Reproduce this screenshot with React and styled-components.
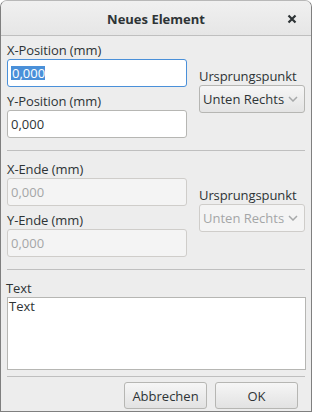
import React from 'react'
import styled, { createGlobalStyle } from 'styled-components'

const GlobalStyle = createGlobalStyle`
    html, body {
        margin: 0;
        padding: 0;
        background: #ffffff;
    }
    body {
        font-family: "Open Sans", "Noto Sans", sans-serif;
        font-size: 13px;
        color: #2e3436;
    }
`;

export default function App() {
    return (
        <>
            <GlobalStyle />
            <Window>
                <TitleBar>
                    <Title>Neues Element</Title>
                    <CloseButton>
                        <svg width="10" height="10" viewBox="0 0 10 10">
                            <path d="M1.5 1.5 L8.5 8.5 M8.5 1.5 L1.5 8.5" stroke="#2e3436" strokeWidth="2.2" strokeLinecap="butt" />
                        </svg>
                    </CloseButton>
                </TitleBar>

                <Body>
                    <Section>
                        <Fields>
                            <Label>X-Position (mm)</Label>
                            <Field $focused>
                                <Selected>0,000</Selected>
                            </Field>
                            <Label>Y-Position (mm)</Label>
                            <Field>0,000</Field>
                        </Fields>
                        <Origin>
                            <Label>Ursprungspunkt</Label>
                            <Combo>
                                Unten Rechts
                                <Chevron />
                            </Combo>
                        </Origin>
                    </Section>

                    <Separator />

                    <Section $spaced>
                        <Fields>
                            <Label>X-Ende (mm)</Label>
                            <Field $disabled>0,000</Field>
                            <Label>Y-Ende (mm)</Label>
                            <Field $disabled>0,000</Field>
                        </Fields>
                        <Origin>
                            <Label>Ursprungspunkt</Label>
                            <Combo $disabled>
                                Unten Rechts
                                <Chevron />
                            </Combo>
                        </Origin>
                    </Section>

                    <Separator />

                    <TextBlock>
                        <Label>Text</Label>
                        <TextArea>Text</TextArea>
                    </TextBlock>

                    <Separator />

                    <Buttons>
                        <Button>Abbrechen</Button>
                        <Button>OK</Button>
                    </Buttons>
                </Body>
            </Window>
        </>
    )
}

function Chevron() {
    return (
        <ChevronIcon width="10" height="6" viewBox="0 0 10 6">
            <polyline points="1,1 5,5 9,1" fill="none" stroke="#a7a9aa" strokeWidth="1.5" />
        </ChevronIcon>
    )
}

const Window = styled.div`
    width: 312px;
    height: 412px;
    box-sizing: border-box;
    border: 1px solid #7f7f7f;
    border-top-color: #b8b8b8;
    border-radius: 7px 7px 0 0;
    background: #ededed;
    display: flex;
    flex-direction: column;
    overflow: hidden;
`;

const TitleBar = styled.div`
    height: 34px;
    flex-shrink: 0;
    border-bottom: 1px solid #bfbfbf;
    background: linear-gradient(#f0f0f0, #e6e6e6);
    position: relative;
    display: flex;
    align-items: center;
    justify-content: center;
`;

const Title = styled.div`
    font-weight: 700;
    font-size: 13px;
    color: #2e3436;
    margin-top: 1px;
`;

const CloseButton = styled.div`
    position: absolute;
    right: 14px;
    top: 13px;
    width: 10px;
    height: 10px;
    display: flex;
`;

const Body = styled.div`
    flex: 1;
    display: flex;
    flex-direction: column;
    padding: 6px 5px 0 5px;
`;

const Section = styled.div`
    display: grid;
    grid-template-columns: 180px 106px;
    column-gap: 12px;
    align-items: center;
    padding: 0 0 12px 1px;
    margin-top: ${p => p.$spaced ? '10px' : '0'};
`;

const Fields = styled.div`
    display: flex;
    flex-direction: column;

    & > div:nth-child(3) {
        margin-top: 6px;
    }
`;

const Origin = styled.div`
    display: flex;
    flex-direction: column;
`;

const Label = styled.div`
    height: 17px;
    line-height: 17px;
    white-space: nowrap;
    color: #2e3436;
    letter-spacing: -0.1px;
`;

const Field = styled.div`
    height: 28px;
    box-sizing: border-box;
    border: 1px solid ${p => p.$focused ? '#4a90d9' : p.$disabled ? '#cfcdca' : '#b6b6b3'};
    border-radius: 3px;
    background: ${p => p.$disabled ? '#f4f4f4' : '#ffffff'};
    color: ${p => p.$disabled ? '#a4a6a7' : '#2e3436'};
    padding: 0 3px;
    display: flex;
    align-items: center;
    white-space: nowrap;
`;

const Selected = styled.span`
    background: #4a90d9;
    color: #ffffff;
    line-height: 14px;
    padding: 0 0 0 1px;
`;

const Combo = styled.div`
    height: 28px;
    box-sizing: border-box;
    border: 1px solid ${p => p.$disabled ? '#cfcdca' : '#b6b6b3'};
    border-radius: 3px;
    background: ${p => p.$disabled ? '#f4f4f4' : 'linear-gradient(#f6f6f6, #e4e4e4)'};
    color: ${p => p.$disabled ? '#a4a6a7' : '#2e3436'};
    padding: 0 6px 0 3px;
    display: flex;
    align-items: center;
    justify-content: space-between;
    white-space: nowrap;
`;

const ChevronIcon = styled.svg`
    flex-shrink: 0;
`;

const Separator = styled.div`
    height: 1px;
    background: #bfbfbf;
    margin: 0 1px;
`;

const TextBlock = styled.div`
    display: flex;
    flex-direction: column;
    padding: 10px 0 6px 0;
`;

const TextArea = styled.div`
    height: 73px;
    box-sizing: border-box;
    border: 1px solid #b6b6b3;
    background: #ffffff;
    margin-left: 1px;
    padding: 0 1px;
    line-height: 17px;
    color: #2e3436;
`;

const Buttons = styled.div`
    display: flex;
    justify-content: flex-end;
    gap: 8px;
    padding: 5px 8px 0 0;
`;

const Button = styled.div`
    width: 83px;
    height: 27px;
    box-sizing: border-box;
    border: 1px solid #b6b6b3;
    border-radius: 3px;
    background: linear-gradient(#f6f6f6, #e2e2e2);
    display: flex;
    align-items: center;
    justify-content: center;
    color: #2e3436;
`;
